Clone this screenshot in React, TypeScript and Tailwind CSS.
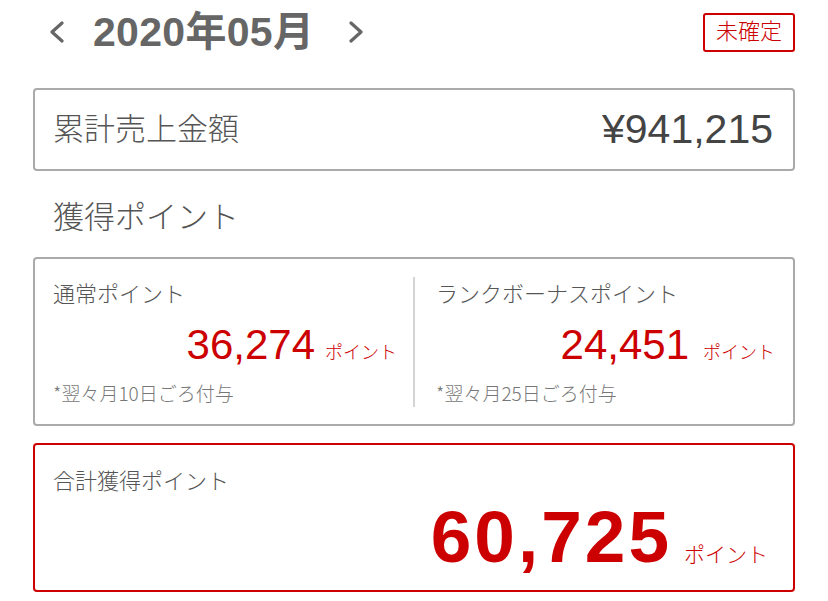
import React from "react";

const font = { fontFamily: '"Liberation Sans", "Noto Sans CJK JP", sans-serif' };

function ChevronLeft() {
  return (
    <svg width="17" height="22" viewBox="0 0 17 22" fill="none">
      <path d="M14 2 L4 11 L14 20" stroke="#666" strokeWidth="3.2" strokeLinecap="round" strokeLinejoin="round" />
    </svg>
  );
}
function ChevronRight() {
  return (
    <svg width="17" height="22" viewBox="0 0 17 22" fill="none">
      <path d="M3 2 L13 11 L3 20" stroke="#666" strokeWidth="3.2" strokeLinecap="round" strokeLinejoin="round" />
    </svg>
  );
}

export default function App() {
  return (
    <div className="w-[828px] h-[601px] bg-white overflow-hidden px-[33px] font-light" style={font}>
      {/* header */}
      <div className="flex items-center justify-between h-[64px]">
        <div className="flex items-center">
          <div className="ml-[15px] flex items-center"><ChevronLeft /></div>
          <div className="ml-[28px] text-[41px] font-bold text-[#666] leading-none tracking-[0.3px]">2020年05月</div>
          <div className="ml-[34px] flex items-center"><ChevronRight /></div>
        </div>
        <div className="w-[92px] h-[39px] border-2 border-[#cc0000] rounded-[3px] flex items-center justify-center text-[22px] text-[#cc0000] leading-none">
          未確定
        </div>
      </div>

      {/* card 1 */}
      <div className="mt-[24px] h-[83px] border-2 border-[#aaaaaa] rounded-[4px] flex items-center justify-between pl-[18px] pr-[20px]">
        <div className="text-[31px] text-[#555] leading-none">累計売上金額</div>
        <div className="text-[41px] text-[#444] leading-none font-normal">¥941,215</div>
      </div>

      <div className="pt-[28px] pl-[20px] text-[31px] leading-[38px] text-[#555]">獲得ポイント</div>

      {/* card 2 */}
      <div className="mt-[20px] h-[169px] border-2 border-[#aaaaaa] rounded-[4px] flex px-[18px] pt-[18px] pb-[17px]">
        <div className="w-[344px] flex flex-col">
          <div className="text-[22px] leading-[36px] text-[#555]">通常ポイント</div>
          <div className="mt-[11px] flex items-baseline justify-end text-[#cc0000]">
            <span className="text-[42px] leading-none font-normal">36,274</span>
            <span className="ml-[10px] text-[18px] leading-none">ポイント</span>
          </div>
          <div className="mt-[15px] text-[19px] leading-[24px] text-[#777] font-['Noto_Sans_CJK_JP',sans-serif]">
            *翌々月10日ごろ付与
          </div>
        </div>
        <div className="ml-[16px] w-[2px] bg-[#d4d4d4]" />
        <div className="ml-[21px] flex-1 flex flex-col">
          <div className="text-[22px] leading-[36px] text-[#555]">ランクボーナスポイント</div>
          <div className="mt-[11px] flex items-baseline justify-end text-[#cc0000]">
            <span className="text-[42px] leading-none font-normal">24,451</span>
            <span className="ml-[14px] text-[18px] leading-none">ポイント</span>
          </div>
          <div className="mt-[15px] text-[19px] leading-[24px] text-[#777] font-['Noto_Sans_CJK_JP',sans-serif]">
            *翌々月25日ごろ付与
          </div>
        </div>
      </div>

      {/* card 3 */}
      <div className="mt-[17px] h-[149px] border-2 border-[#cc0000] rounded-[4px] flex flex-col pl-[18px] pr-[25px] pt-[22px]">
        <div className="text-[22px] leading-[30px] text-[#555]">合計獲得ポイント</div>
        <div className="mt-[3px] flex items-baseline justify-end text-[#cc0000]">
          <span className="text-[73px] font-bold leading-none tracking-[3px]">60,725</span>
          <span className="ml-[12px] text-[21px] leading-none">ポイント</span>
        </div>
      </div>
    </div>
  );
}
